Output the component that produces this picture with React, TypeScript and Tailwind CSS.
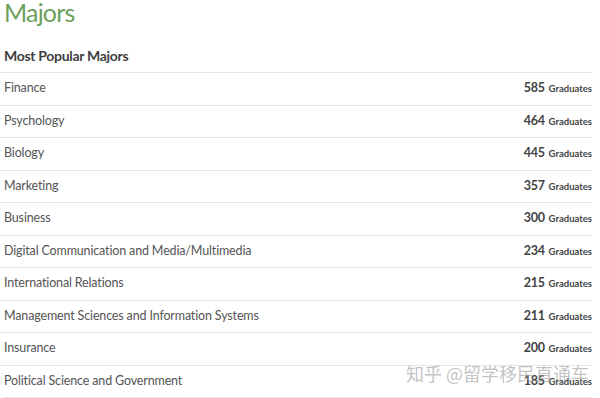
import React from 'react';

const majors = [
  { name: 'Finance', count: 585 },
  { name: 'Psychology', count: 464 },
  { name: 'Biology', count: 445 },
  { name: 'Marketing', count: 357 },
  { name: 'Business', count: 300 },
  { name: 'Digital Communication and Media/Multimedia', count: 234 },
  { name: 'International Relations', count: 215 },
  { name: 'Management Sciences and Information Systems', count: 211 },
  { name: 'Insurance', count: 200 },
  { name: 'Political Science and Government', count: 185 },
];

const App: React.FC = () => {
  return (
    <div className="relative w-[600px] h-[398px] overflow-hidden bg-white font-['Lato','Liberation_Sans',sans-serif]">
      {/* Heading */}
      <h1 className="pl-1 text-[25px] leading-[24px] tracking-[-0.8px] text-[#6b9f5c]">Majors</h1>

      <div className="pl-1 pr-2 mt-[23px]">
        <h2 className="text-[14px] leading-[18px] font-bold tracking-[-0.3px] text-[#3f3f3f]">Most Popular Majors</h2>

        <ul className="mt-[7px] border-b border-[#e6e6e6]">
          {majors.map((m) => (
            <li
              key={m.name}
              className="h-[32.5px] flex items-center justify-between border-t border-[#e6e6e6] -ml-1 pl-1"
            >
              <span className="text-[12.5px] tracking-[-0.15px] text-[#555]">{m.name}</span>
              <span className="flex items-baseline gap-[4px] text-[#444]">
                <span className="text-[12.5px] font-bold tracking-[-0.3px]">{m.count}</span>
                <span className="text-[9.5px] font-bold">Graduates</span>
              </span>
            </li>
          ))}
        </ul>
      </div>

      {/* watermark */}
      <div className="absolute left-[406px] top-[361px] whitespace-nowrap text-[18px] leading-[24px] text-[#9a9a9a]/60 font-['Noto_Sans_CJK_SC',sans-serif]">
        知乎 @留学移民直通车
      </div>
    </div>
  );
};

export default App;
